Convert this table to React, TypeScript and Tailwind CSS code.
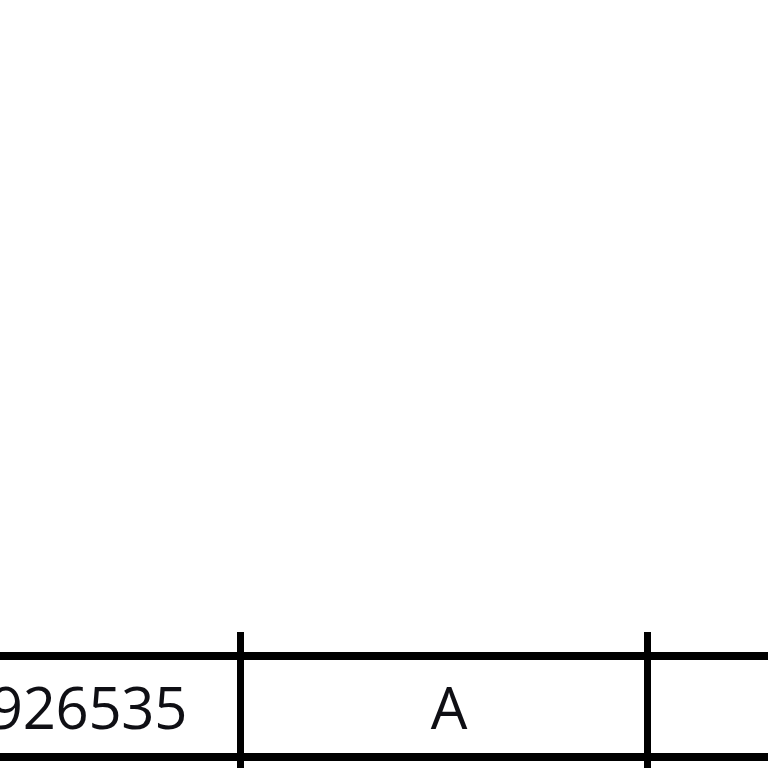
export default function App() {
	return (
		<div
			className="flex h-screen w-full flex-col overflow-hidden bg-white text-[#0f0f14]"
			style={{ fontFamily: '"Open Sans", "Liberation Sans", sans-serif' }}
		>
			<div className="flex-1" />

			{/* stub of the row above */}
			<div className="flex h-[20px] shrink-0">
				<div className="w-[244px] shrink-0 border-r-[7px] border-black" />
				<div className="w-[407px] shrink-0 border-r-[7px] border-black" />
				<div className="flex-1" />
			</div>

			{/* data row */}
			<div className="flex h-[109px] shrink-0 border-y-[8px] border-black">
				<div className="flex w-[244px] shrink-0 items-center justify-end overflow-hidden whitespace-nowrap border-r-[7px] border-black pr-[50px] text-[58px] font-medium tracking-[-0.3px]">
					3.1415926535
				</div>
				<div className="flex w-[407px] shrink-0 items-center justify-center border-r-[7px] border-black pl-[10px] text-[58px] font-medium">
					A
				</div>
				<div className="flex-1" />
			</div>

			{/* stub of the row below */}
			<div className="flex h-[7px] shrink-0">
				<div className="w-[244px] shrink-0 border-r-[7px] border-black" />
				<div className="w-[407px] shrink-0 border-r-[7px] border-black" />
				<div className="flex-1" />
			</div>
		</div>
	);
}
